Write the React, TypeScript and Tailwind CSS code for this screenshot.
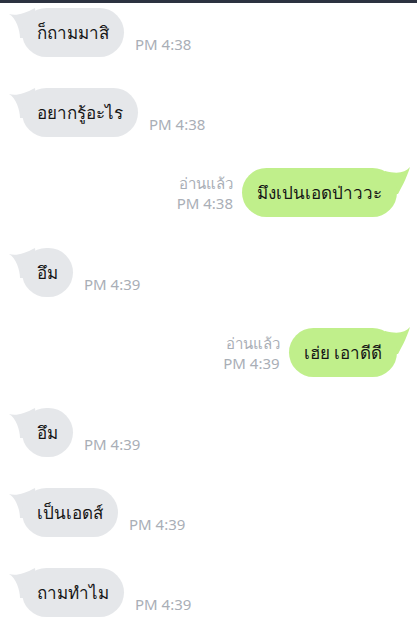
const messages = [
  { side: 'left', text: 'ก็ถามมาสิ', time: 'PM 4:38' },
  { side: 'left', text: 'อยากรู้อะไร', time: 'PM 4:38' },
  { side: 'right', text: 'มึงเปนเอดป่าววะ', time: 'PM 4:38', read: true },
  { side: 'left', text: 'อึม', time: 'PM 4:39' },
  { side: 'right', text: 'เฮ่ย เอาดีดี', time: 'PM 4:39', read: true },
  { side: 'left', text: 'อึม', time: 'PM 4:39' },
  { side: 'left', text: 'เป็นเอดส์', time: 'PM 4:39' },
  { side: 'left', text: 'ถามทำไม', time: 'PM 4:39' },
]

function LeftTail() {
  return (
    <svg className="absolute -left-[14px] top-0" width="30" height="30" viewBox="0 0 30 30">
      <path d="M1 6 C8 8, 16 6, 27 0 L30 30 L12 30 C12 22, 8 10, 1 6 Z" fill="#e5e7ea" />
    </svg>
  )
}

function RightTail() {
  return (
    <svg className="absolute -right-[14px] -top-[4px]" width="30" height="30" viewBox="0 0 30 30">
      <path d="M29 3 C24 9, 16 10, 4 7 L0 30 L17 30 C20 24, 25 16, 29 3 Z" fill="#c0ef8b" />
    </svg>
  )
}

export default function App() {
  return (
    <div className="min-h-[638px] bg-white" style={{ fontFamily: '"Noto Sans", Tahoma, sans-serif' }}>
      <div className="h-[3px] bg-[#2c3240]" />
      <div className="flex flex-col gap-[31px] pt-[5px]">
        {messages.map((m, i) =>
          m.side === 'left' ? (
            <div key={i} className="flex items-end pl-[22px]">
              <div className="relative">
                <LeftTail />
                <div className="relative h-[49px] flex items-center rounded-full bg-[#e5e7ea] px-[15px] text-[17px] text-[#161616]">
                  {m.text}
                </div>
              </div>
              <span className="ml-[11px] mb-[2px] text-[15px] text-[#a9aeb6]">{m.time}</span>
            </div>
          ) : (
            <div key={i} className="flex items-center justify-end pr-[20px]">
              <div className="mr-[9px] flex flex-col items-end text-[15px] leading-[20px] text-[#a9aeb6]">
                <span>อ่านแล้ว</span>
                <span>{m.time}</span>
              </div>
              <div className="relative">
                <RightTail />
                <div className="relative h-[49px] flex items-center rounded-full bg-[#c0ef8b] px-[15px] text-[17px] text-[#161616]">
                  {m.text}
                </div>
              </div>
            </div>
          )
        )}
      </div>
    </div>
  )
}
